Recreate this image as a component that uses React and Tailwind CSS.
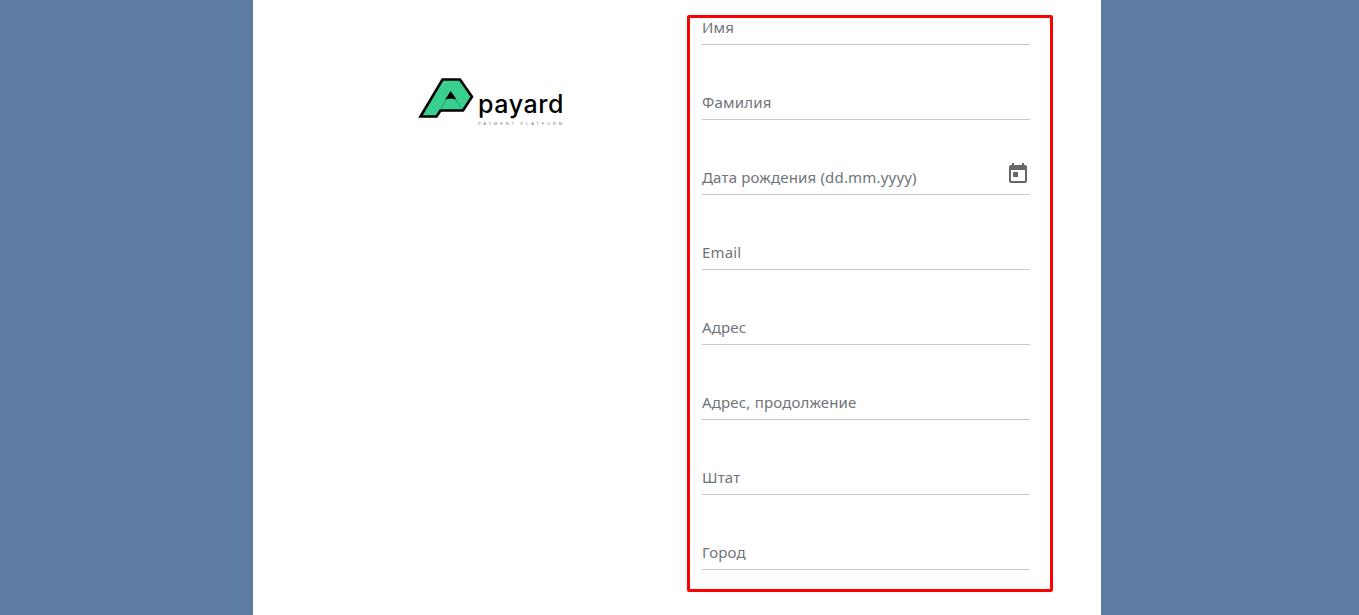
const fields = ["Фамилия", "Дата рождения (dd.mm.yyyy)", "Email", "Адрес", "Адрес, продолжение", "Штат", "Город"];

function Field({ label, first }) {
  return (
    <div className={`relative flex items-end border-b border-[#c8c8c8] ${first ? "h-[27px]" : "h-[75px]"}`}>
      <span className="pb-[7px] text-[15px] leading-[20px] tracking-[0.18px] text-[#6f7479]">{label}</span>
      {label.startsWith("Дата") && <TodayIcon />}
    </div>
  );
}

function TodayIcon() {
  return (
    <svg viewBox="0 0 24 24" className="absolute right-0 bottom-[8px] w-6 h-6 fill-[#666]">
      <path d="M19 3h-1V1h-2v2H8V1H6v2H5c-1.11 0-1.99.9-1.99 2L3 19c0 1.1.89 2 2 2h14c1.1 0 2-.9 2-2V5c0-1.1-.9-2-2-2zm0 16H5V8h14v11zM7 10h5v5H7z" />
    </svg>
  );
}

function Logo() {
  return (
    <div className="flex items-start">
      <svg viewBox="0 0 56 42" className="w-14 h-[42px] shrink-0">
        <path d="M2.5 39.5 L24.5 2.5 H42 L54 19.7 L45 33.5 H22.5 L18.5 39.5 Z" fill="#38cf8f" stroke="#000" strokeWidth="2.6" strokeLinejoin="miter" />
        <path d="M32.7 14 L27 22.5 L32.7 21.5 L38.5 22.5 Z" fill="#000" />
        <path d="M37 22 L44 32 M28 22 L22.5 33.5" stroke="#1a6b4c" strokeWidth="0.5" fill="none" />
      </svg>
      <div className="ml-[4px] mt-[13px] flex flex-col">
        <span className="text-[25px] leading-[28px] font-medium text-black font-['Inter',sans-serif] tracking-[0.6px]">payard</span>
        <span className="mt-[3px] text-[4px] leading-[6px] tracking-[2.85px] text-[#777] whitespace-nowrap font-['Liberation_Sans',sans-serif]">PAYMENT PLATFORM</span>
      </div>
    </div>
  );
}

export default function App() {
  return (
    <div className="h-screen overflow-hidden bg-[#5c7ca3] font-['Noto_Sans',sans-serif]">
      <div className="ml-[253px] flex h-full w-[848px] bg-white">
        <div className="w-[434px] shrink-0 pl-[165px] pt-[77px]">
          <Logo />
        </div>
        <div className="mt-[15px] h-[577px] w-[366px] rounded-[2px] border-[3px] border-[#ff0000] pl-3 pr-5">
          <Field label="Имя" first />
          {fields.map((f) => (
            <Field key={f} label={f} />
          ))}
        </div>
      </div>
    </div>
  );
}
